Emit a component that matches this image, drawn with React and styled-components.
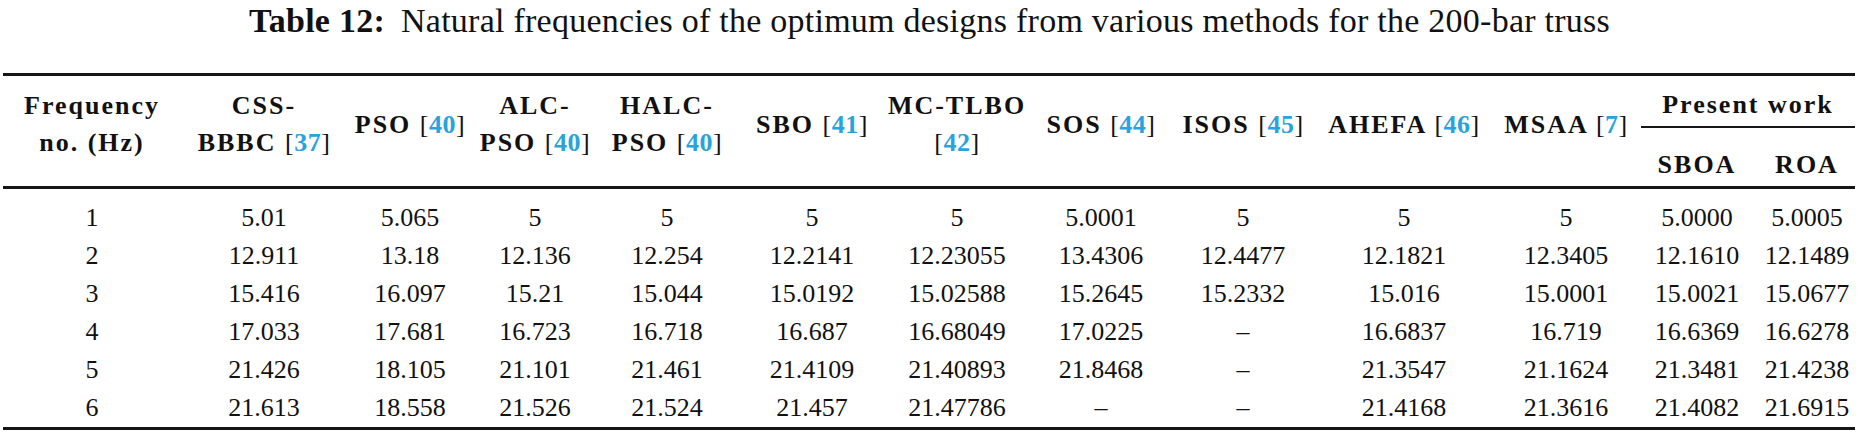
import styled, { createGlobalStyle } from "styled-components"

const serif = `"Liberation Serif", "Times New Roman", serif`

const GlobalStyle = createGlobalStyle`
  html, body {
    margin: 0;
    padding: 0;
    background: #ffffff;
  }
  body {
    font-family: ${serif};
    color: #111111;
  }
`

const columnWidths = [178, 166, 126, 124, 140, 150, 140, 148, 136, 186, 138, 124, 96]

const rows = [
  ["1", "5.01", "5.065", "5", "5", "5", "5", "5.0001", "5", "5", "5", "5.0000", "5.0005"],
  ["2", "12.911", "13.18", "12.136", "12.254", "12.2141", "12.23055", "13.4306", "12.4477", "12.1821", "12.3405", "12.1610", "12.1489"],
  ["3", "15.416", "16.097", "15.21", "15.044", "15.0192", "15.02588", "15.2645", "15.2332", "15.016", "15.0001", "15.0021", "15.0677"],
  ["4", "17.033", "17.681", "16.723", "16.718", "16.687", "16.68049", "17.0225", "–", "16.6837", "16.719", "16.6369", "16.6278"],
  ["5", "21.426", "18.105", "21.101", "21.461", "21.4109", "21.40893", "21.8468", "–", "21.3547", "21.1624", "21.3481", "21.4238"],
  ["6", "21.613", "18.558", "21.526", "21.524", "21.457", "21.47786", "–", "–", "21.4168", "21.3616", "21.4082", "21.6915"],
]

const Page = styled.div`
  width: 1859px;
  background: #ffffff;
  font-family: ${serif};
`

const Caption = styled.div`
  padding-top: 2px;
  margin-bottom: 33px;
  font-family: ${serif};
  font-size: 34px;
  line-height: 38px;
  letter-spacing: 0.25px;
  text-align: center;
  white-space: nowrap;
`

const CaptionLabel = styled.b`
  font-weight: 700;
  margin-right: 16px;
`

const Table = styled.table`
  margin-left: 3px;
  width: 1852px;
  table-layout: fixed;
  border-collapse: separate;
  border-spacing: 0;
  border-top: 3px solid #161616;
  border-bottom: 3px solid #161616;
  font-family: ${serif};
  color: #111111;
`

const HeadCell = styled.th`
  padding: ${(p) => (p.$spanned ? "0 0 14px" : "18px 0 3px")};
  vertical-align: ${(p) => (p.$spanned ? "middle" : "top")};
  border-bottom: 3px solid #161616;
  font-family: ${serif};
  font-size: 26px;
  line-height: 37px;
  font-weight: 700;
  letter-spacing: 2px;
  text-align: center;
  white-space: nowrap;
`

const GroupCell = styled.th`
  padding: 0 0 0 6px;
  vertical-align: top;
  font-family: ${serif};
  font-size: 26px;
  font-weight: 700;
  letter-spacing: 2px;
  text-align: center;
  white-space: nowrap;
`

const GroupLabel = styled.div`
  padding: 10px 0 3px;
  line-height: 37px;
  border-bottom: 2px solid #161616;
`

const Bracket = styled.span`
  font-weight: 400;
  letter-spacing: 0.5px;
`

const RefNum = styled.span`
  color: #29a3dc;
  font-weight: 700;
  letter-spacing: 0.5px;
`

const Row = styled.tr`
  &:first-child td {
    padding-top: 10px;
  }
`

const Cell = styled.td`
  padding: 0;
  height: 38px;
  font-family: ${serif};
  font-size: 26px;
  line-height: 38px;
  text-align: center;
  white-space: nowrap;
`

function Ref({ n }) {
  return (
    <>
      {" "}
      <Bracket>[</Bracket>
      <RefNum>{n}</RefNum>
      <Bracket>]</Bracket>
    </>
  )
}

export default function App() {
  return (
    <Page>
      <GlobalStyle />
      <Caption>
        <CaptionLabel>Table 12:</CaptionLabel>
        Natural frequencies of the optimum designs from various methods for the 200-bar truss
      </Caption>
      <Table>
        <colgroup>
          {columnWidths.map((w, i) => (
            <col key={i} style={{ width: w }} />
          ))}
        </colgroup>
        <thead>
          <tr>
            <HeadCell $spanned rowSpan={2}>
              Frequency
              <br />
              no. (Hz)
            </HeadCell>
            <HeadCell $spanned rowSpan={2}>
              CSS-
              <br />
              BBBC<Ref n="37" />
            </HeadCell>
            <HeadCell $spanned rowSpan={2}>
              PSO<Ref n="40" />
            </HeadCell>
            <HeadCell $spanned rowSpan={2}>
              ALC-
              <br />
              PSO<Ref n="40" />
            </HeadCell>
            <HeadCell $spanned rowSpan={2}>
              HALC-
              <br />
              PSO<Ref n="40" />
            </HeadCell>
            <HeadCell $spanned rowSpan={2}>
              SBO<Ref n="41" />
            </HeadCell>
            <HeadCell $spanned rowSpan={2}>
              MC-TLBO
              <br />
              <Bracket>[</Bracket>
              <RefNum>42</RefNum>
              <Bracket>]</Bracket>
            </HeadCell>
            <HeadCell $spanned rowSpan={2}>
              SOS<Ref n="44" />
            </HeadCell>
            <HeadCell $spanned rowSpan={2}>
              ISOS<Ref n="45" />
            </HeadCell>
            <HeadCell $spanned rowSpan={2}>
              AHEFA<Ref n="46" />
            </HeadCell>
            <HeadCell $spanned rowSpan={2}>
              MSAA<Ref n="7" />
            </HeadCell>
            <GroupCell colSpan={2}>
              <GroupLabel>Present work</GroupLabel>
            </GroupCell>
          </tr>
          <tr>
            <HeadCell>SBOA</HeadCell>
            <HeadCell>ROA</HeadCell>
          </tr>
        </thead>
        <tbody>
          {rows.map((row) => (
            <Row key={row[0]}>
              {row.map((value, i) => (
                <Cell key={i}>{value}</Cell>
              ))}
            </Row>
          ))}
        </tbody>
      </Table>
    </Page>
  )
}
